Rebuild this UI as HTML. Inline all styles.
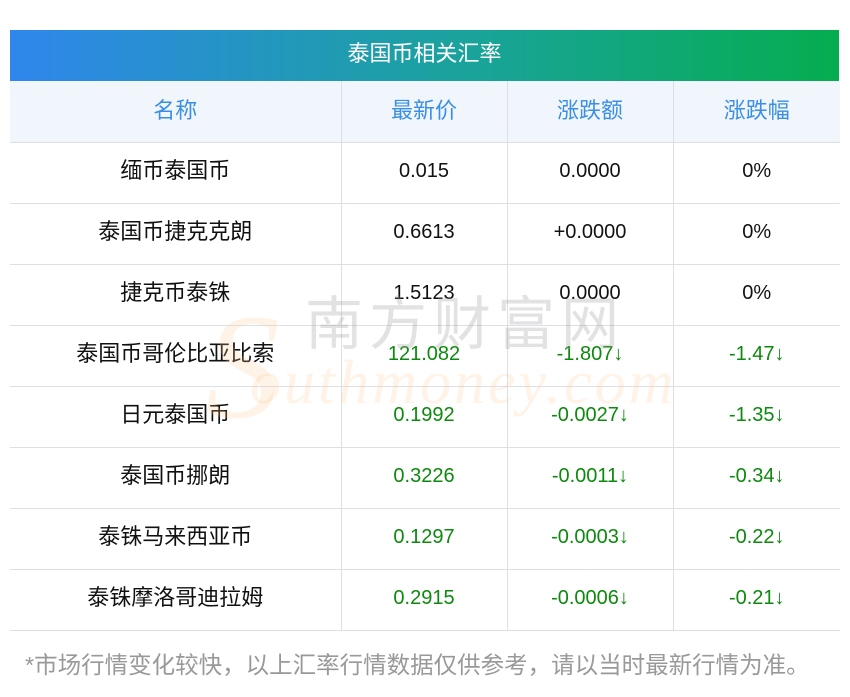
<!DOCTYPE html>
<html><head><meta charset="utf-8"><style>
body{margin:0;background:#fff;width:850px;height:697px;position:relative;overflow:hidden;font-family:"Liberation Sans","Noto Sans CJK SC",sans-serif;}
.title{position:absolute;left:10px;top:30px;width:829px;height:51px;background:linear-gradient(90deg,#2f86ec,#1aa39b 55%,#05ad4f);color:#fff;font-size:22px;line-height:51px;text-align:center;}
.title span,.c span{display:inline-block;line-height:1;position:relative;top:-2px;}
table{position:absolute;left:10px;top:81px;width:830px;border-collapse:collapse;table-layout:fixed;}
td{height:61px;border-bottom:1px solid #dcdfea;border-left:1px solid #dcdfea;text-align:center;font-size:20px;color:#111;padding:0 0 4px 0;line-height:1;box-sizing:border-box;}
td.c{padding:0}
td:first-child{border-left:none}
.c{font-size:22px;}
tr.h td{background:#f1f6fd;color:#3a8ee6;height:61px;}
tr.h td span{top:0}
.g{color:#0d8a0d}
.foot{position:absolute;left:25px;top:654px;font-size:23.5px;color:#999;line-height:1;white-space:nowrap;}
.wm1{position:absolute;left:305px;top:296px;font-size:58px;color:rgba(160,160,160,0.3);letter-spacing:6px;line-height:1;}
.wm2{position:absolute;left:250px;top:352px;font-size:62px;font-style:italic;font-family:"Liberation Serif",serif;color:rgba(250,200,140,0.22);letter-spacing:3px;line-height:1;}
.wm3{position:absolute;left:205px;top:292px;font-size:150px;font-style:italic;font-family:"Liberation Serif",serif;color:rgba(250,200,140,0.22);line-height:1;}
</style></head><body>
<div class="title"><span>泰国币相关汇率</span></div>
<table>
<colgroup><col style="width:331px"><col style="width:166px"><col style="width:166px"><col style="width:167px"></colgroup>
<tr class="h"><td class="c"><span>名称</span></td><td class="c"><span>最新价</span></td><td class="c"><span>涨跌额</span></td><td class="c"><span>涨跌幅</span></td></tr>
<tr><td class="c"><span>缅币泰国币</span></td><td>0.015</td><td>0.0000</td><td>0%</td></tr>
<tr><td class="c"><span>泰国币捷克克朗</span></td><td>0.6613</td><td>+0.0000</td><td>0%</td></tr>
<tr><td class="c"><span>捷克币泰铢</span></td><td>1.5123</td><td>0.0000</td><td>0%</td></tr>
<tr><td class="c"><span>泰国币哥伦比亚比索</span></td><td class="g">121.082</td><td class="g">-1.807↓</td><td class="g">-1.47↓</td></tr>
<tr><td class="c"><span>日元泰国币</span></td><td class="g">0.1992</td><td class="g">-0.0027↓</td><td class="g">-1.35↓</td></tr>
<tr><td class="c"><span>泰国币挪朗</span></td><td class="g">0.3226</td><td class="g">-0.0011↓</td><td class="g">-0.34↓</td></tr>
<tr><td class="c"><span>泰铢马来西亚币</span></td><td class="g">0.1297</td><td class="g">-0.0003↓</td><td class="g">-0.22↓</td></tr>
<tr><td class="c"><span>泰铢摩洛哥迪拉姆</span></td><td class="g">0.2915</td><td class="g">-0.0006↓</td><td class="g">-0.21↓</td></tr>
</table>
<div class="wm3">S</div>
<div class="wm1">南方财富网</div>
<div class="wm2">outhmoney.com</div>
<div class="foot">*市场行情变化较快，以上汇率行情数据仅供参考，请以当时最新行情为准。</div>
</body></html>
